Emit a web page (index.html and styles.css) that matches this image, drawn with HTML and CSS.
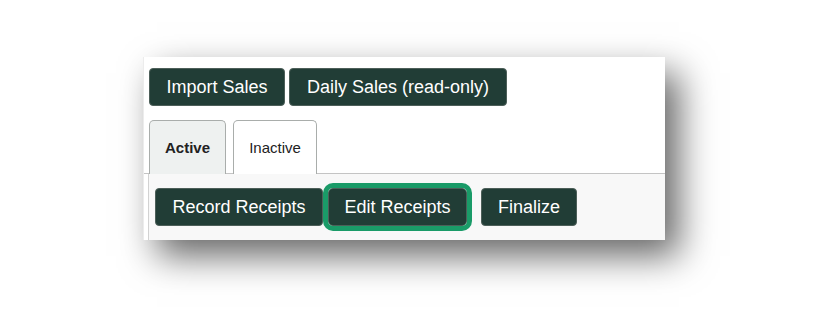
FILE: index.html
```html
<!DOCTYPE html>
<html>
<head>
<meta charset="utf-8">
<link rel="stylesheet" href="styles.css">
</head>
<body>
<div class="panel">
  <div class="toolbar">
    <button class="btn btn-import">Import Sales</button>
    <button class="btn btn-daily">Daily Sales (read-only)</button>
  </div>
  <div class="tabs">
    <div class="tab tab-active">Active</div>
    <div class="tab">Inactive</div>
  </div>
  <div class="content">
    <button class="btn btn-record">Record Receipts</button>
    <button class="btn btn-edit">Edit Receipts</button>
    <button class="btn btn-finalize">Finalize</button>
  </div>
</div>
</body>
</html>
```
FILE: styles.css
```css
html, body {
  margin: 0;
  padding: 0;
  background: #ffffff;
}
body {
  width: 823px;
  height: 324px;
  overflow: hidden;
  font-family: "Liberation Sans", Arial, sans-serif;
}
.panel {
  margin: 57px 0 0 143px;
  width: 522px;
  height: 183px;
  background: #ffffff;
  box-shadow: 14px 16px 34px rgba(0, 0, 0, 0.6);
  border-left: 1px solid #ececec;
  box-sizing: border-box;
  display: flex;
  flex-direction: column;
}
.toolbar {
  display: flex;
  gap: 4px;
  padding: 11px 0 0 5px;
}
.btn {
  font-family: "Liberation Sans", Arial, sans-serif;
  font-size: 18px;
  color: #ffffff;
  background: #213d36;
  border: 1px solid #4d5f59;
  border-radius: 4px;
  height: 38px;
  padding: 0;
  box-sizing: border-box;
  cursor: pointer;
}
.btn-import { width: 136px; }
.btn-daily { width: 218px; }
.tabs {
  display: flex;
  gap: 7px;
  padding: 14px 0 0 5px;
  border-bottom: 1px solid #c4c4c4;
}
.tab {
  height: 54px;
  box-sizing: border-box;
  border: 1px solid #a9adab;
  border-bottom: none;
  border-radius: 5px 5px 0 0;
  background: #ffffff;
  font-size: 15px;
  color: #222;
  display: flex;
  align-items: center;
  justify-content: center;
  width: 84px;
  margin-bottom: -1px;
}
.tab-active {
  width: 77px;
  background: #eef1f0;
  font-weight: bold;
}
.content {
  flex: 1;
  margin-left: 4px;
  border-left: 1px solid #d2d2d2;
  background: #f8f8f8;
  display: flex;
  align-items: flex-start;
  padding: 14px 0 0 6px;
}
.btn-record { width: 168px; }
.btn-edit {
  width: 139px;
  margin-left: 5px;
  outline: 5px solid #1a9b68;
  outline-offset: 0;
  border-radius: 5px;
}
.btn-finalize {
  width: 96px;
  margin-left: 14px;
}
```
